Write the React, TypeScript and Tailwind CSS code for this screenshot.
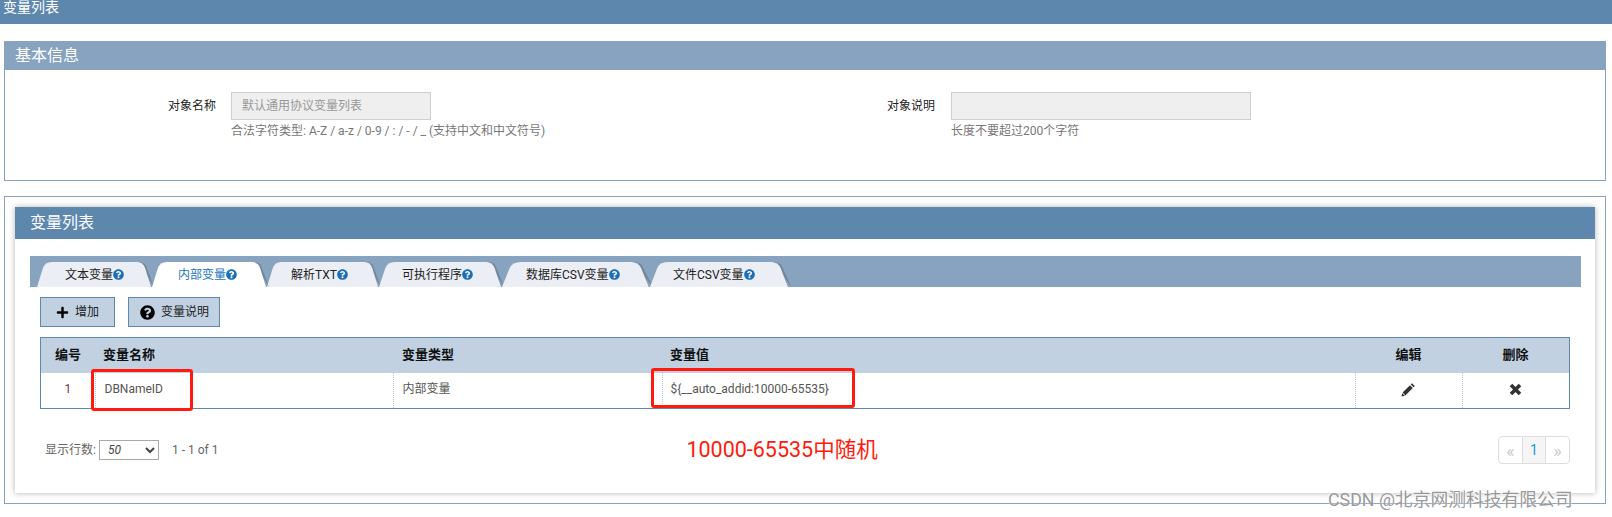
import { FaPlus, FaQuestionCircle } from 'react-icons/fa';

const tabs = [
  { label: '文本变量', w: 'w-[115px]', pl: 'pl-[28px]' },
  { label: '内部变量', w: 'w-[115px]', pl: 'pl-[26px]', active: true },
  { label: '解析TXT', w: 'w-[112px]', pl: 'pl-[24px]' },
  { label: '可执行程序', w: 'w-[123px]', pl: 'pl-[23px]' },
  { label: '数据库CSV变量', w: 'w-[148px]', pl: 'pl-[24px]' },
  { label: '文件CSV变量', w: 'w-[139px]', pl: 'pl-[23px]' },
];

function Tab({ label, w, pl, active }: { label: string; w: string; pl: string; active?: boolean }) {
  return (
    <div className={`relative h-[25px] ${w} ${pl} flex items-center text-[12px] ${active ? 'text-[#1b76bc] z-10' : 'text-[#222]'}`}>
      {/* tab shape */}
      <svg className="absolute inset-0 w-full h-full overflow-visible" viewBox="0 0 116 25" preserveAspectRatio="none">
        <path d="M118 25 L110 4 Q108 0 103 0 Z" fill="#6b7d8e" opacity="0.75" />
        <path d="M0 25 L6 6 Q8 0 15 0 L101 0 Q107 0 109 6 L115 25 Z" fill={active ? '#ffffff' : '#ebeef4'} />
      </svg>
      <span className="relative">{label}</span>
      <FaQuestionCircle className="relative text-[#1a6fb5] text-[11px]" />
    </div>
  );
}

export default function App() {
  return (
    <div className="relative h-[517px] w-[1612px] overflow-hidden bg-white font-['Roboto','Noto_Sans_CJK_SC',sans-serif] text-[12px] text-[#333]">
      {/* Page title */}
      <div className="h-[24px] bg-[#5e87ae] pl-[3px] text-[14px] leading-[14px] text-white">变量列表</div>

      {/* Basic info */}
      <div className="mt-[17px] ml-[4px] mr-[6px] h-[140px] border border-[#87a3c0]">
        <div className="h-[28px] bg-[#87a3c0] pl-[10px] text-[16px] leading-[27px] text-white">基本信息</div>
        <div className="flex pt-[22px]">
          <div className="flex w-[720px]">
            <div className="w-[226px] pr-[15px] pt-[5px] text-right text-[12px] text-[#222]">对象名称</div>
            <div>
              <div className="h-[28px] w-[200px] border border-[#cfcfcf] bg-[#efefef] pl-[10px] text-[12px] leading-[26px] text-[#999]">默认通用协议变量列表</div>
              <div className="mt-[2px] text-[12px] text-[#777]">合法字符类型: A-Z / a-z / 0-9 / : / - / _ (支持中文和中文符号)</div>
            </div>
          </div>
          <div className="flex">
            <div className="w-[226px] pr-[16px] pt-[5px] text-right text-[12px] text-[#222]">对象说明</div>
            <div>
              <div className="h-[28px] w-[300px] border border-[#cfcfcf] bg-[#efefef]" />
              <div className="mt-[2px] text-[12px] text-[#777]">长度不要超过200个字符</div>
            </div>
          </div>
        </div>
      </div>

      {/* Variable list */}
      <div className="mt-[15px] ml-[4px] mr-[6px] h-[308px] border border-[#87a3c0] pt-[10px] pl-[10px] pr-[10px]">
        <div className="h-[286px] bg-white shadow-[0_0_6px_rgba(0,0,0,0.3)]">
          <div className="h-[32px] bg-[#5e87ae] pl-[15px] text-[16px] leading-[31px] text-white">变量列表</div>

          <div className="ml-[15px] mr-[14px] mt-[17px] flex h-[31px] items-end bg-[#87a3c0] pl-[7px]">
            {tabs.map((t) => (
              <Tab key={t.label} {...t} />
            ))}
          </div>

          <div className="ml-[25px] mt-[10px] flex gap-[13px]">
            <button className="flex h-[30px] w-[75px] items-center border border-[#5e87ae] bg-[#c1d1e2] pl-[15px] text-[12px] text-[#222]">
              <FaPlus className="mr-[6px] text-[13px] text-black" />
              增加
            </button>
            <button className="flex h-[30px] w-[92px] items-center border border-[#5e87ae] bg-[#c1d1e2] pl-[11px] text-[12px] text-[#222]">
              <FaQuestionCircle className="mr-[6px] text-[15px] text-black" />
              变量说明
            </button>
          </div>

          <div className="ml-[25px] mr-[25px] mt-[10px] border border-[#5e87ae]">
            <table className="w-full table-fixed border-collapse">
              <thead>
                <tr className="h-[35px] bg-[#c1d1e2] text-[13px] font-bold text-[#111]">
                  <th className="w-[54px] pb-[2px] text-center font-bold">编号</th>
                  <th className="w-[298px] pb-[2px] pl-[8px] text-left font-bold">变量名称</th>
                  <th className="w-[269px] pb-[2px] pl-[9px] text-left font-bold">变量类型</th>
                  <th className="w-[693px] pb-[2px] pl-[8px] text-left font-bold">变量值</th>
                  <th className="w-[107px] pb-[2px] text-center font-bold">编辑</th>
                  <th className="pb-[2px] text-center font-bold">删除</th>
                </tr>
              </thead>
              <tbody>
                <tr className="h-[35px] text-[12px] text-[#555]">
                  <td className="pb-[3px] text-center text-[#7a2e52]">1</td>
                  <td className="border-l border-dotted border-[#b5c8dc] pb-[3px] pl-[9px]">DBNameID</td>
                  <td className="border-l border-dotted border-[#b5c8dc] pb-[3px] pl-[9px]">内部变量</td>
                  <td className="border-l border-dotted border-[#b5c8dc] pb-[3px] pl-[8px]">{'${__auto_addid:10000-65535}'}</td>
                  <td className="border-l border-dotted border-[#b5c8dc] pb-[2px]">
                    {/* pencil */}
                    <svg className="mx-auto" width="15" height="15" viewBox="0 0 15 15">
                      <path d="M11 1.2 L13.8 4 L12.6 5.2 L9.8 2.4 Z" fill="#333" />
                      <path d="M9 3.2 L11.8 6 L4.4 13.4 L1.6 10.6 Z" fill="#333" />
                      <path d="M1.2 11.2 L3.8 13.8 L0.5 14.5 Z" fill="#333" />
                    </svg>
                  </td>
                  <td className="border-l border-dotted border-[#b5c8dc] pb-[2px]">
                    {/* close */}
                    <svg className="mx-auto" width="13" height="13" viewBox="0 0 13 13">
                      <path d="M2 2 L11 11 M11 2 L2 11" stroke="#333" strokeWidth="3.6" />
                    </svg>
                  </td>
                </tr>
              </tbody>
            </table>
          </div>

          {/* Footer */}
          <div className="ml-[30px] mr-[25px] mt-[27px] flex items-center">
            <span className="text-[12px] text-[#666]">显示行数:</span>
            <select className="ml-[3px] h-[20px] w-[60px] border border-[#aaa] bg-white pl-[4px] text-[12px] italic text-[#444]">
              <option>50</option>
            </select>
            <span className="ml-[13px] text-[12px] text-[#666]">1 - 1 of 1</span>
            <span className="ml-[468px] text-[21.5px] leading-[22px] text-[#ff1a0d]">10000-65535中随机</span>
            <div className="ml-auto flex h-[28px] w-[72px] overflow-hidden rounded-[4px] border border-[#ddd] text-[14px]">
              <span className="flex w-[23px] items-center justify-center text-[18px] text-[#ccc]">«</span>
              <span className="flex w-[24px] items-center justify-center border-x border-[#ddd] bg-[#f5f5f5] text-[#1b9ad6]">1</span>
              <span className="flex flex-1 items-center justify-center text-[18px] text-[#ccc]">»</span>
            </div>
          </div>
        </div>
      </div>

      {/* Red annotation boxes */}
      <div className="absolute left-[91px] top-[369px] h-[42px] w-[102px] rounded-[3px] border-[3px] border-[#ff1a0d]" />
      <div className="absolute left-[651px] top-[368px] h-[40px] w-[204px] rounded-[3px] border-[3px] border-[#ff1a0d]" />

      {/* Watermark */}
      <div className="absolute left-[1328px] top-[487px] whitespace-nowrap text-[17.8px] text-[#999] [text-shadow:0_0_2px_white]">CSDN @北京网测科技有限公司</div>
    </div>
  );
}
